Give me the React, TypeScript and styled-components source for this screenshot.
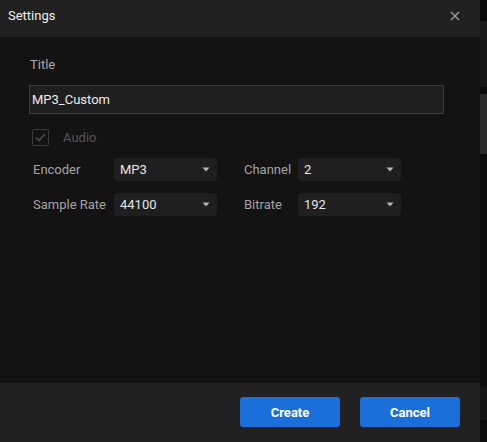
import React, { useState } from 'react';
import styled, { createGlobalStyle } from 'styled-components';

const GlobalStyle = createGlobalStyle`
  html, body { margin: 0; padding: 0; background: #0b0b0b; }
  body { font-family: Roboto, "Liberation Sans", Arial, sans-serif; }
`;

const Page = styled.div`
  display: flex;
  width: 487px;
  height: 442px;
  overflow: hidden;
`;

const Dialog = styled.div`
  width: 480px;
  height: 442px;
  display: flex;
  flex-direction: column;
  background: #131313;
`;

const Header = styled.div`
  height: 37px;
  flex: none;
  box-sizing: border-box;
  display: flex;
  align-items: flex-start;
  justify-content: space-between;
  padding: 8px 18px 0 8px;
  background: #212121;
  color: #f0f0f0;
  font-size: 13px;
  line-height: 16px;
`;

const CloseButton = styled.button`
  border: 0;
  background: transparent;
  padding: 0;
  margin-top: 1px;
  width: 14px;
  height: 14px;
  display: flex;
  align-items: center;
  justify-content: center;
  cursor: pointer;
`;

const Body = styled.div`
  flex: 1;
  padding: 20px 36px 0 29px;
`;

const FieldLabel = styled.div`
  color: #a9a9a9;
  font-size: 13px;
  line-height: 16px;
  padding-left: 1px;
  margin-bottom: 12px;
`;

const TextInput = styled.input`
  box-sizing: border-box;
  width: 415px;
  height: 29px;
  background: #1f1f1f;
  border: 1px solid #3b3b3b;
  color: #ececec;
  font-family: inherit;
  font-size: 13px;
  padding: 0 2px;
  outline: none;
`;

const CheckRow = styled.label`
  display: flex;
  align-items: center;
  gap: 14px;
  margin: 15px 0 12px 3px;
  color: #545454;
  font-size: 13px;
`;

const CheckBox = styled.span`
  box-sizing: border-box;
  width: 17px;
  height: 17px;
  border: 1.5px solid #3a3a3a;
  border-radius: 2px;
  display: flex;
  align-items: center;
  justify-content: center;
`;

const Grid = styled.div`
  display: grid;
  grid-template-columns: 81px 103px 81px 103px;
  row-gap: 12px;
  padding-left: 4px;
`;

const RowLabel = styled.div<{ $indent?: number }>`
  color: #a3a3a3;
  font-size: 13px;
  display: flex;
  align-items: center;
  white-space: nowrap;
  padding-left: ${p => p.$indent ?? 0}px;
`;

const SelectBox = styled.div`
  height: 23px;
  border-radius: 4px;
  background: #1f1f1f;
  display: flex;
  align-items: center;
  justify-content: space-between;
  padding: 0 7px 0 6px;
  color: #e6e6e6;
  font-size: 13px;
  cursor: pointer;
`;

const Footer = styled.div`
  height: 59px;
  flex: none;
  background: #212121;
  display: flex;
  justify-content: flex-end;
  align-items: flex-start;
  gap: 20px;
  padding: 14px 20px 0 0;
  box-sizing: border-box;
`;

const ActionButton = styled.button`
  width: 100px;
  height: 30px;
  border: 0;
  border-radius: 3px;
  background: #1a6fdb;
  color: #ffffff;
  font-family: inherit;
  font-weight: 700;
  font-size: 13px;
  cursor: pointer;
`;

const Strip = styled.div`
  width: 7px;
  display: flex;
  flex-direction: column;
`;

const StripPart = styled.div<{ $h: number; $c: string }>`
  height: ${p => p.$h}px;
  background: ${p => p.$c};
  flex: none;
`;

const Caret = () => (
  <svg width="8" height="5" viewBox="0 0 8 5">
    <path d="M0.5 0.5 L7.5 0.5 L4 4.5 Z" fill="#b5b5b5" />
  </svg>
);

const Select = ({ value }: { value: string }) => (
  <SelectBox>
    <span>{value}</span>
    <Caret />
  </SelectBox>
);

export default function App() {
  const [title, setTitle] = useState('MP3_Custom');
  return (
    <Page>
      <GlobalStyle />
      <Dialog>
        <Header>
          <span>Settings</span>
          <CloseButton aria-label="close">
            <svg width="10" height="10" viewBox="0 0 10 10">
              <path d="M1 1 L9 9 M9 1 L1 9" stroke="#9a9a9a" strokeWidth="1.4" />
            </svg>
          </CloseButton>
        </Header>
        <Body>
          <FieldLabel>Title</FieldLabel>
          <TextInput value={title} onChange={e => setTitle(e.target.value)} />
          <CheckRow>
            <CheckBox>
              <svg width="11" height="9" viewBox="0 0 11 9">
                <path d="M1 4.5 L4 7.5 L10 1" stroke="#4d4d4d" strokeWidth="1.6" fill="none" />
              </svg>
            </CheckBox>
            Audio
          </CheckRow>
          <Grid>
            <RowLabel>Encoder</RowLabel>
            <Select value="MP3" />
            <RowLabel $indent={27}>Channel</RowLabel>
            <Select value="2" />
            <RowLabel>Sample Rate</RowLabel>
            <Select value="44100" />
            <RowLabel $indent={27}>Bitrate</RowLabel>
            <Select value="192" />
          </Grid>
        </Body>
        <Footer>
          <ActionButton>Create</ActionButton>
          <ActionButton>Cancel</ActionButton>
        </Footer>
      </Dialog>
      <Strip>
        <StripPart $h={21} $c="#0b0b0b" />
        <StripPart $h={20} $c="#1b1b1b" />
        <StripPart $h={46} $c="#161616" />
        <StripPart $h={7} $c="#0a0a0a" />
        <StripPart $h={60} $c="#2a2a2a" />
        <StripPart $h={233} $c="#0c0c0c" />
        <StripPart $h={33} $c="#151515" />
        <StripPart $h={22} $c="#0c0c0c" />
      </Strip>
    </Page>
  );
}
